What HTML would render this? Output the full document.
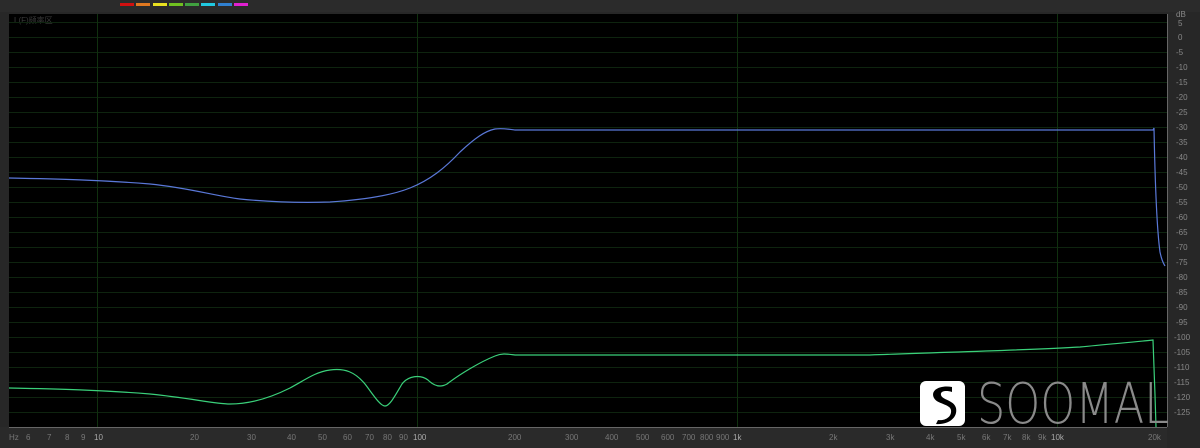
<!DOCTYPE html>
<html><head><meta charset="utf-8"><style>
html,body{margin:0;padding:0;background:#272727;width:1200px;height:448px;overflow:hidden}
svg{display:block;font-family:"Liberation Sans",sans-serif}
</style></head><body>
<svg width="1200" height="448" viewBox="0 0 1200 448">
<rect width="1200" height="448" fill="#272727"/>
<rect x="0" y="0" width="1200" height="12" fill="#2b2b2b"/>
<g>
<rect x="120" y="3" width="14" height="3" fill="#d01010"/>
<rect x="136" y="3" width="14" height="3" fill="#e07820"/>
<rect x="153" y="3" width="14" height="3" fill="#e8e020"/>
<rect x="169" y="3" width="14" height="3" fill="#70c020"/>
<rect x="185" y="3" width="14" height="3" fill="#40a040"/>
<rect x="201" y="3" width="14" height="3" fill="#20c8e0"/>
<rect x="218" y="3" width="14" height="3" fill="#3080d0"/>
<rect x="234" y="3" width="14" height="3" fill="#e020d0"/>
</g>
<rect x="9" y="14" width="1158" height="413" fill="#000"/>
<text x="14" y="23" font-size="8" fill="#3a3a3a">L(F)频率区</text>
<g stroke="#0e240f" stroke-width="1">
<line x1="9" x2="1167" y1="22.5" y2="22.5"/><line x1="9" x2="1167" y1="37.5" y2="37.5"/><line x1="9" x2="1167" y1="52.5" y2="52.5"/><line x1="9" x2="1167" y1="67.5" y2="67.5"/><line x1="9" x2="1167" y1="82.5" y2="82.5"/><line x1="9" x2="1167" y1="97.5" y2="97.5"/><line x1="9" x2="1167" y1="112.5" y2="112.5"/><line x1="9" x2="1167" y1="127.5" y2="127.5"/><line x1="9" x2="1167" y1="142.5" y2="142.5"/><line x1="9" x2="1167" y1="157.5" y2="157.5"/><line x1="9" x2="1167" y1="172.5" y2="172.5"/><line x1="9" x2="1167" y1="187.5" y2="187.5"/><line x1="9" x2="1167" y1="202.5" y2="202.5"/><line x1="9" x2="1167" y1="217.5" y2="217.5"/><line x1="9" x2="1167" y1="232.5" y2="232.5"/><line x1="9" x2="1167" y1="247.5" y2="247.5"/><line x1="9" x2="1167" y1="262.5" y2="262.5"/><line x1="9" x2="1167" y1="277.5" y2="277.5"/><line x1="9" x2="1167" y1="292.5" y2="292.5"/><line x1="9" x2="1167" y1="307.5" y2="307.5"/><line x1="9" x2="1167" y1="322.5" y2="322.5"/><line x1="9" x2="1167" y1="337.5" y2="337.5"/><line x1="9" x2="1167" y1="352.5" y2="352.5"/><line x1="9" x2="1167" y1="367.5" y2="367.5"/><line x1="9" x2="1167" y1="382.5" y2="382.5"/><line x1="9" x2="1167" y1="397.5" y2="397.5"/><line x1="9" x2="1167" y1="412.5" y2="412.5"/>
</g>
<g stroke="#10300f"><line x1="97.5" x2="97.5" y1="14" y2="427"/><line x1="417.5" x2="417.5" y1="14" y2="427"/><line x1="737.5" x2="737.5" y1="14" y2="427"/><line x1="1057.5" x2="1057.5" y1="14" y2="427"/></g>
<path d="M9,178 C60,179 100,180 150,184 C190,188 215,196 240,199 C270,202 300,203 330,202 C360,200 390,196 410,188 C430,180 445,168 460,152 C475,138 485,131 495,129 C502,128 508,129 515,130 L1153,130 L1154,128 C1155,180 1157,230 1160,252 C1162,262 1164,264 1165,266" fill="none" stroke="#5a78d8" stroke-width="1.2"/>
<path d="M9,388 C60,389 100,390 150,394 C190,398 215,404 230,404 C250,404 270,398 290,388 C305,380 315,372 330,370 C345,368 355,372 365,384 C372,393 380,406 385,406 C390,406 396,394 402,384 C408,376 420,374 428,380 C434,386 440,388 447,384 C460,374 480,362 495,356 C502,353 507,354 515,355 L870,355 C950,352 1030,350 1080,347 C1110,344 1135,342 1153,340 L1155,395 L1156,427" fill="none" stroke="#3ad07a" stroke-width="1.2"/>
<rect x="0" y="427" width="1167" height="21" fill="#2a2a2a"/>
<line x1="9" x2="1167" y1="427.5" y2="427.5" stroke="#666"/>
<g fill="#777" font-size="8">
<text x="9" y="440">Hz</text><text x="26" y="440">6</text><text x="47" y="440">7</text><text x="65" y="440">8</text><text x="81" y="440">9</text><text x="94" y="440" fill="#aaa">10</text>
<text x="190" y="440">20</text><text x="247" y="440">30</text><text x="287" y="440">40</text><text x="318" y="440">50</text><text x="343" y="440">60</text><text x="365" y="440">70</text><text x="383" y="440">80</text><text x="399" y="440">90</text><text x="413" y="440" fill="#aaa">100</text>
<text x="508" y="440">200</text><text x="565" y="440">300</text><text x="605" y="440">400</text><text x="636" y="440">500</text><text x="661" y="440">600</text><text x="682" y="440">700</text><text x="700" y="440">800</text><text x="716" y="440">900</text><text x="733" y="440" fill="#aaa">1k</text>
<text x="829" y="440">2k</text><text x="886" y="440">3k</text><text x="926" y="440">4k</text><text x="957" y="440">5k</text><text x="982" y="440">6k</text><text x="1003" y="440">7k</text><text x="1022" y="440">8k</text><text x="1038" y="440">9k</text><text x="1051" y="440" fill="#aaa">10k</text>
<text x="1148" y="440">20k</text>
</g>
<line x1="1167.5" x2="1167.5" y1="14" y2="427" stroke="#666"/>
<g fill="#888" font-size="8">
<text x="1176" y="17">dB</text><text x="1178" y="26">5</text><text x="1178" y="40">0</text>
<text x="1176" y="55">-5</text><text x="1176" y="70">-10</text><text x="1176" y="85">-15</text><text x="1176" y="100">-20</text><text x="1176" y="115">-25</text><text x="1176" y="130">-30</text><text x="1176" y="145">-35</text><text x="1176" y="160">-40</text><text x="1176" y="175">-45</text><text x="1176" y="190">-50</text><text x="1176" y="205">-55</text><text x="1176" y="220">-60</text><text x="1176" y="235">-65</text><text x="1176" y="250">-70</text><text x="1176" y="265">-75</text><text x="1176" y="280">-80</text><text x="1176" y="295">-85</text><text x="1176" y="310">-90</text><text x="1176" y="325">-95</text><text x="1174" y="340">-100</text><text x="1174" y="355">-105</text><text x="1174" y="370">-110</text><text x="1174" y="385">-115</text><text x="1174" y="400">-120</text><text x="1174" y="415">-125</text>
</g>
<rect x="920" y="381" width="45" height="45" rx="6" fill="#fff"/>
<path d="M952,387 C940,385 930,390 934,398 C937,404 950,404 951,410 C952,417 945,421 938,420 L936,424 C948,425 958,418 956,408 C954,400 942,400 941,395 C940,391 946,390 952,392 Z" fill="#000"/>
<text x="977" y="423" font-size="56" fill="#8a8a8a" style="font-family:'DejaVu Sans','Liberation Sans',sans-serif;font-weight:200" textLength="192" lengthAdjust="spacingAndGlyphs">SOOMAL</text>
</svg>
</body></html>
